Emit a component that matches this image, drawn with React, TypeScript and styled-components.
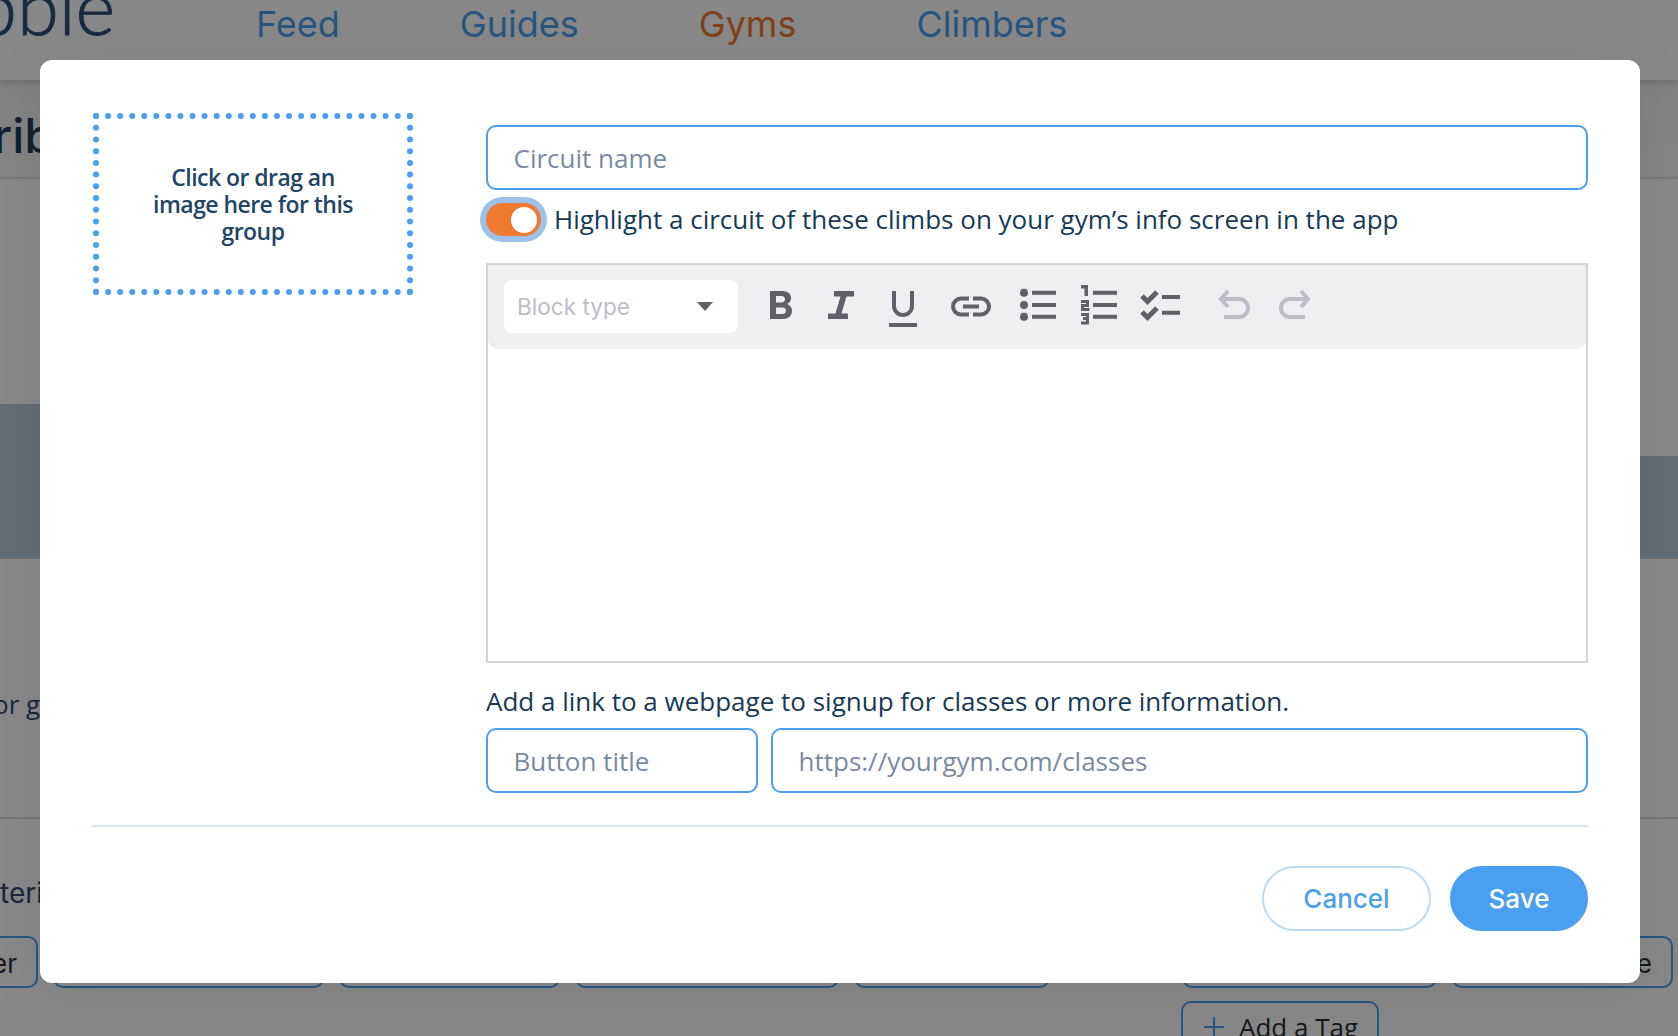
import styled, { createGlobalStyle } from "styled-components";

const GlobalStyle = createGlobalStyle`
  html, body {
    margin: 0;
    padding: 0;
    height: 100%;
    overflow: hidden;
    background: #fff;
  }
  * {
    box-sizing: border-box;
  }
`;

const Page = styled.div`
  position: relative;
  width: 1678px;
  height: 1036px;
  overflow: hidden;
  font-family: "Open Sans", sans-serif;
  color: #2e4a6b;
`;

/* page behind the modal */
const Header = styled.header`
  display: flex;
  height: 80px;
  overflow: hidden;
  background: #fff;
  box-shadow: 0 2px 10px rgba(0, 0, 0, 0.2);
  position: relative;
`;

const Logo = styled.div`
  width: 256px;
  margin-top: -44px;
  height: 100px;
  line-height: 100px;
  font-family: Lato, sans-serif;
  font-size: 76px;
  font-weight: 300;
  -webkit-text-stroke: 0.9px #2e4f78;
  color: #2e4f78;
  text-indent: -25px;
  white-space: nowrap;
`;

const Nav = styled.nav`
  display: flex;
  gap: 120px;
`;

const NavLink = styled.a<{ $active?: boolean }>`
  font-family: Inter, sans-serif;
  font-size: 36px;
  line-height: 48px;
  color: ${(p) => (p.$active ? "#f07a2f" : "#4a9ff0")};
`;

const TitleRow = styled.div`
  height: 99px;
  padding: 14px 0 0;
  margin-left: -7px;
  border-bottom: 2px solid #dfe5ea;
  display: flex;
  align-items: center;
  font-family: Inter, sans-serif;
  font-size: 48px;
  font-weight: 500;
  color: #263d58;
  background: linear-gradient(#f3f5f5, #fafafa);
`;

const BandRow = styled.div`
  height: 380px;
  display: flex;
  justify-content: space-between;
  align-items: flex-end;
  border-bottom: 2px solid #c9d2d8;
`;

const Band = styled.div<{ $height: number }>`
  width: 40px;
  height: ${(p) => p.$height}px;
  background: #b9cddb;
`;

const NoteRow = styled.div`
  height: 260px;
  padding-top: 127px;
  margin-left: -7px;
  font-size: 26px;
  line-height: 36px;
  color: #2e4a6b;
  border-bottom: 2px solid #dfe5ea;
`;

const SectionTitle = styled.div`
  height: 117px;
  padding-top: 54px;
  font-family: Inter, sans-serif;
  font-size: 28px;
  line-height: 40px;
  color: #2e4a6b;
`;

const ChipRow = styled.div`
  display: flex;
  gap: 15px;
  margin-left: -11px;
  padding-right: 5px;
`;

const Chip = styled.div<{ $width: number; $push?: boolean }>`
  display: flex;
  align-items: center;
  justify-content: flex-end;
  flex: none;
  width: ${(p) => p.$width}px;
  height: 52px;
  padding: 3px 19px 0;
  margin-left: ${(p) => (p.$push ? "auto" : "0")};
  border: 2.5px solid #4a9ff0;
  border-radius: 10px;
  font-family: Inter, sans-serif;
  font-size: 26px;
  color: #2b2f36;
`;

const AddTag = styled.div`
  display: flex;
  align-items: center;
  gap: 13px;
  width: 198px;
  height: 51px;
  margin: 13px 0 0 1181px;
  padding-left: 19px;
  border: 2.5px solid #4a9ff0;
  border-radius: 10px;
  font-size: 26px;
  color: #2b2f36;
  white-space: nowrap;
`;

/* modal */
const Backdrop = styled.div`
  position: absolute;
  inset: 0;
  padding: 60px 38px 0 40px;
  background: rgba(0, 0, 0, 0.467);
`;

const Modal = styled.div`
  width: 1600px;
  height: 923px;
  padding: 52px;
  background: #fff;
  border-radius: 12px;
  box-shadow: 0 10px 60px rgba(0, 0, 0, 0.08);
`;

const ModalBody = styled.div`
  display: flex;
  gap: 73px;
`;

const DropZone = styled.div`
  flex: none;
  display: flex;
  align-items: center;
  justify-content: center;
  width: 320px;
  height: 182px;
  margin: 1px 0 0 1px;
  padding: 0 40px;
  border: 6px dotted #4a9ff0;
  font-size: 23px;
  font-weight: 600;
  line-height: 27px;
  letter-spacing: -0.55px;
  text-align: center;
  color: #234565;
`;

const Form = styled.div`
  flex: 1;
  min-width: 0;
  padding-top: 13px;
`;

const TextInput = styled.input<{ $width?: string }>`
  display: block;
  width: ${(p) => p.$width ?? "100%"};
  flex: ${(p) => (p.$width ? "none" : "1")};
  min-width: 0;
  height: 65px;
  padding: 0 26px 0 25.5px;
  border: 2px solid #4a9ff0;
  border-radius: 10px;
  outline: none;
  background: #fff;
  font-family: "Open Sans", sans-serif;
  font-size: 26px;
  color: #163a55;

  &::placeholder {
    color: #7a8aa0;
    opacity: 1;
  }
`;

const ToggleRow = styled.div`
  display: flex;
  align-items: center;
  gap: 13px;
  height: 33px;
  margin: 13px 0 27px;
`;

const Toggle = styled.span`
  flex: none;
  display: flex;
  justify-content: flex-end;
  align-items: center;
  width: 55px;
  height: 33px;
  padding-right: 4px;
  border-radius: 17px;
  background: #f07a2f;
  box-shadow: 0 0 0 6px #9cc2ea;
`;

const ToggleThumb = styled.span`
  width: 26px;
  height: 26px;
  border-radius: 50%;
  background: #fff;
`;

const Label = styled.span`
  font-size: 26px;
  line-height: 36px;
  color: #163a55;
  white-space: nowrap;
`;

const ToggleLabel = styled(Label)`
  margin-top: -2px;
`;

const Editor = styled.div`
  height: 400px;
  border: 2px solid #d4d4d6;
`;

const Toolbar = styled.div`
  display: flex;
  align-items: center;
  height: 84px;
  padding: 0 16px 1px;
  background: #efeff1;
  border-radius: 0 0 10px 10px;
`;

const BlockSelect = styled.div`
  flex: none;
  display: flex;
  align-items: center;
  justify-content: space-between;
  width: 234px;
  height: 53px;
  padding: 0 25px 0 13px;
  margin-right: 32px;
  border-radius: 8px;
  background: #fff;
  font-family: Inter, sans-serif;
  font-size: 22.6px;
  color: #bcbdc6;
`;

const Caret = styled.span`
  width: 0;
  height: 0;
  border-left: 8px solid transparent;
  border-right: 8px solid transparent;
  border-top: 9px solid #5f6068;
`;

const ToolIcon = styled.svg<{ $gap: number; $off?: boolean }>`
  flex: none;
  height: 48px;
  margin-right: ${(p) => p.$gap}px;
  fill: ${(p) => (p.$off ? "#bcbdc6" : "#5f6068")};
  stroke: ${(p) => (p.$off ? "#bcbdc6" : "#5f6068")};
  stroke-width: 0;
`;

const Stroke = styled.path<{ $w?: number }>`
  fill: none;
  stroke-width: ${(p) => p.$w ?? 4}px;
`;

const LinkLabel = styled.div`
  margin: 20px 0 9px;
`;

const LinkRow = styled.div`
  display: flex;
  gap: 13px;
`;

const Divider = styled.hr`
  height: 2px;
  margin: 32px 0 39px;
  border: none;
  background: #d9e7f2;
`;

const Footer = styled.div`
  display: flex;
  justify-content: flex-end;
  gap: 19px;
`;

const PillButton = styled.button<{ $primary?: boolean }>`
  width: ${(p) => (p.$primary ? "138px" : "169px")};
  height: 65px;
  border: 2px solid ${(p) => (p.$primary ? "#4a9ff0" : "#bfdaef")};
  border-radius: 33px;
  background: ${(p) => (p.$primary ? "#4a9ff0" : "#fff")};
  font-family: Inter, sans-serif;
  font-size: 26px;
  font-weight: 500;
  color: ${(p) => (p.$primary ? "#fff" : "#4a9ff0")};
`;

function Icon({ w, gap, off, children }: { w: number; gap: number; off?: boolean; children: React.ReactNode }) {
  return (
    <ToolIcon $gap={gap} $off={off} width={w} viewBox={`0 -4 ${w} 48`}>
      {children}
    </ToolIcon>
  );
}

const listLines = "M12 5.7h24M12 18h24M12 29.7h24";
const undoPath = "M10 4 3 12l7 8M3 12h18a9 9 0 0 1 0 18H6";

export default function App() {
  return (
    <Page>
      <GlobalStyle />
      <Header>
        <Logo>bble</Logo>
        <Nav>
          <NavLink>Feed</NavLink>
          <NavLink>Guides</NavLink>
          <NavLink $active>Gyms</NavLink>
          <NavLink>Climbers</NavLink>
        </Nav>
      </Header>
      <TitleRow>rib</TitleRow>
      <BandRow>
        <Band $height={153} />
        <Band $height={101} />
      </BandRow>
      <NoteRow>or g</NoteRow>
      <SectionTitle>teri</SectionTitle>
      <ChipRow>
        <Chip $width={49}>er</Chip>
        <Chip $width={271} />
        <Chip $width={221} />
        <Chip $width={264} />
        <Chip $width={196} />
        <Chip $width={255} $push />
        <Chip $width={221}>e</Chip>
      </ChipRow>
      <AddTag>
        <svg width="24" height="24" viewBox="0 0 24 24" fill="none" stroke="#4a9ff0" strokeWidth="2">
          <path d="M12 2v20M2 12h20" />
        </svg>
        Add a Tag
      </AddTag>

      <Backdrop>
        <Modal>
          <ModalBody>
            <DropZone>Click or drag an image here for this group</DropZone>
            <Form>
              <TextInput placeholder="Circuit name" />
              <ToggleRow>
                <Toggle>
                  <ToggleThumb />
                </Toggle>
                <ToggleLabel>Highlight a circuit of these climbs on your gym’s info screen in the app</ToggleLabel>
              </ToggleRow>
              <Editor>
                <Toolbar>
                  <BlockSelect>
                    Block type
                    <Caret />
                  </BlockSelect>
                  <Icon w={22} gap={36}>
                    <path
                      fillRule="evenodd"
                      d="M0 4h12c6 0 9 3 9 7 0 3-1.5 5-4 6 3 1 5 3.5 5 7 0 5-4 8-9.5 8H0zM6 9v6.500h5.500c2.200 0 3.500-1.300 3.500-3.200S13.700 9 11.500 9zm0 11.500v6.500h6c2.500 0 4-1.300 4-3.300s-1.500-3.200-4-3.200z"
                    />
                  </Icon>
                  <Icon w={26} gap={35}>
                    <path d="M6 4h20v5.500h-7.500L13.500 26.500H20V32H0v-5.500h7.500L12.500 9.500H6z" />
                  </Icon>
                  <Icon w={28} gap={34}>
                    <Stroke d="M5 4v15a9 9 0 0 0 18 0V4" />
                    <path d="M0 36h28v4H0z" />
                  </Icon>
                  <Icon w={40} gap={29}>
                    <Stroke d="M18 11.500H10a8 8 0 0 0 0 16h8M22 11.500h8a8 8 0 0 1 0 16h-8M12 19.500h16" />
                  </Icon>
                  <Icon w={36} gap={25}>
                    <circle cx="4" cy="5.700" r="4" />
                    <circle cx="4" cy="18" r="4" />
                    <circle cx="4" cy="29.700" r="4" />
                    <Stroke d={listLines} />
                  </Icon>
                  <Icon w={36} gap={23}>
                    <path d="M0-2h7v11H3.500V1.500H0z" />
                    <Stroke $w={3} d="M0 14.500h6.500v4H1.500v4h7M0 27.500h6.500v4H2M6.500 31.500v4.500H0" />
                    <Stroke d={listLines} />
                  </Icon>
                  <Icon w={40} gap={38}>
                    <Stroke $w={5} d="M2 9l5.500 5.500L17 5M2 25l5.500 5.500L17 21" />
                    <Stroke d="M22 10h18M22 25.700h18" />
                  </Icon>
                  <Icon w={32} gap={29} off>
                    <Stroke d={undoPath} />
                  </Icon>
                  <Icon w={32} gap={0} off>
                    <g transform="matrix(-1 0 0 1 32 0)">
                      <Stroke d={undoPath} />
                    </g>
                  </Icon>
                </Toolbar>
              </Editor>
              <LinkLabel>
                <Label>Add a link to a webpage to signup for classes or more information.</Label>
              </LinkLabel>
              <LinkRow>
                <TextInput $width="272px" placeholder="Button title" />
                <TextInput placeholder="https://yourgym.com/classes" />
              </LinkRow>
            </Form>
          </ModalBody>
          <Divider />
          <Footer>
            <PillButton>Cancel</PillButton>
            <PillButton $primary>Save</PillButton>
          </Footer>
        </Modal>
      </Backdrop>
    </Page>
  );
}
